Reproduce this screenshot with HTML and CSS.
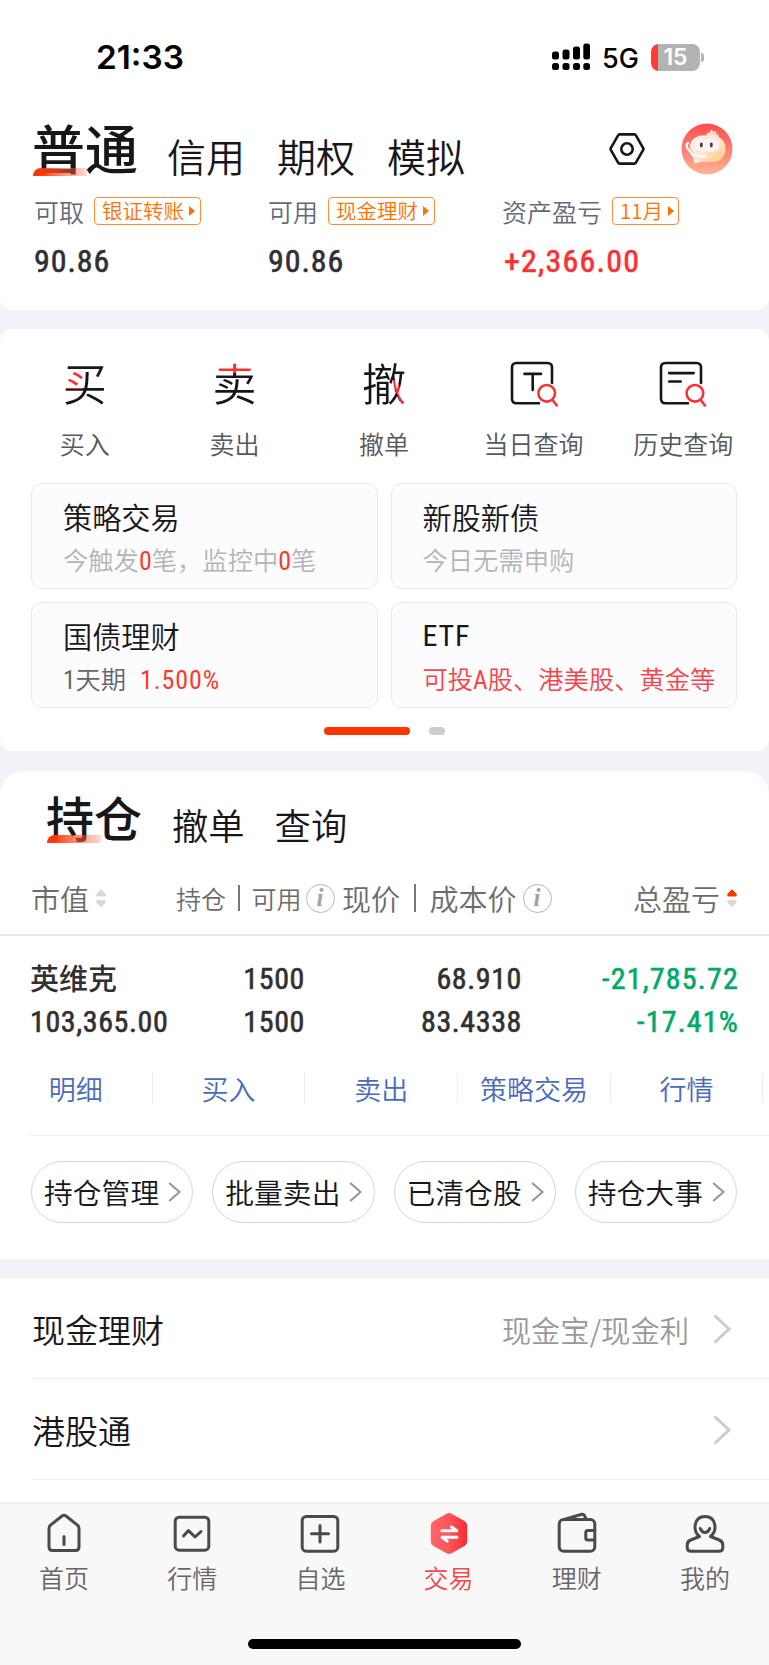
FILE: index.html
```html
<!DOCTYPE html>
<html lang="zh-CN">
<head>
    <meta charset="UTF-8">
    <meta name="viewport" content="width=device-width, initial-scale=1.0">
    <title>交易</title>
    <link rel="stylesheet" href="styles.css">
</head>
<body>
    <div class="app">
        <header class="account">
            <div class="status-bar">
                <span class="time">21:33</span>
                <svg class="signal" width="38" height="28" viewBox="0 0 38 28">
                    <rect x="0" y="8.5" width="7" height="8" rx="2.5"/>
                    <rect x="10.5" y="6.5" width="7" height="10" rx="2.5"/>
                    <rect x="21" y="3.5" width="7" height="13" rx="2.5"/>
                    <rect x="31.3" y="0.5" width="6.7" height="16" rx="2.5"/>
                    <rect x="0" y="20" width="7" height="7" rx="2.5"/>
                    <rect x="10.5" y="20" width="7" height="7" rx="2.5"/>
                    <rect x="21" y="20" width="7" height="7" rx="2.5"/>
                    <rect x="31.3" y="20" width="6.7" height="7" rx="2.5"/>
                </svg>
                <span class="network">5G</span>
                <span class="battery">15</span>
                <span class="battery-cap"></span>
            </div>

            <div class="account-head">
                <nav class="account-tabs">
                    <a class="active">普通</a>
                    <a>信用</a>
                    <a>期权</a>
                    <a>模拟</a>
                </nav>
                <svg class="settings" width="36" height="34" viewBox="0 0 36 34">
                    <path d="M10.600 2.400h14.800q1 0 1.500.9l7.300 12.700q.5 1 0 2l-7.300 12.700q-.5.9-1.500.9H10.600q-1 0-1.500-.9L1.800 18q-.5-1 0-2L9.100 3.300q.5-.9 1.500-.9z"/>
                    <circle cx="18" cy="17" r="5.700"/>
                </svg>
                <svg class="avatar" width="52" height="52" viewBox="0 0 52 52">
                    <defs>
                        <linearGradient id="avatarBg" x1="0" y1="0" x2="0" y2="1">
                            <stop offset="0" stop-color="#fb4c4f"/>
                            <stop offset="0.55" stop-color="#fc8474"/>
                            <stop offset="1" stop-color="#ffb595"/>
                        </linearGradient>
                        <linearGradient id="faceBg" x1="0" y1="0" x2="1" y2="1">
                            <stop offset="0" stop-color="#ffffff"/>
                            <stop offset="0.5" stop-color="#fde6dc"/>
                            <stop offset="0.8" stop-color="#ffd391"/>
                            <stop offset="1" stop-color="#fff0e8"/>
                        </linearGradient>
                    </defs>
                    <circle cx="26" cy="26" r="25.500" fill="url(#avatarBg)"/>
                    <path d="M25 13q1-5 3.500-3 1.500-6 4-1 3-2.500 3 2 3 0 2 4z" fill="#ffd9cb"/>
                    <rect x="8.500" y="12.500" width="36" height="26.500" rx="13" fill="url(#faceBg)"/>
                    <rect x="12.500" y="15" width="26.500" height="14" rx="7" fill="#fff3ee" stroke="#fcd5c8" stroke-width="0.700"/>
                    <path d="M7 20q-3 2 0 6 4 7 16 8" fill="none" stroke="#fff" stroke-width="2.200" stroke-linecap="round"/>
                    <path d="M8.500 21q0 7 5 9" fill="none" stroke="#f99b88" stroke-width="1"/>
                    <rect x="19.500" y="32" width="6" height="3" rx="1.500" fill="#fff"/>
                    <path d="M12 36l2 5q4-1 6-3z" fill="#ffe9e0"/>
                    <ellipse cx="20.300" cy="22" rx="1.500" ry="2.400" fill="#3c4048"/>
                    <ellipse cx="30.300" cy="22" rx="1.500" ry="2.400" fill="#3c4048"/>
                </svg>
            </div>

            <div class="balances">
                <div class="balance">
                    <div class="balance-label">可取 <span class="chip">银证转账<i></i></span></div>
                    <div class="balance-value num">90.86</div>
                </div>
                <div class="balance">
                    <div class="balance-label">可用 <span class="chip">现金理财<i></i></span></div>
                    <div class="balance-value num">90.86</div>
                </div>
                <div class="balance">
                    <div class="balance-label">资产盈亏 <span class="chip chip-month">11月<i></i></span></div>
                    <div class="balance-value num up">+2,366.00</div>
                </div>
            </div>
        </header>

        <section class="trade">
            <div class="trade-actions">
                <a><span class="glyph glyph-buy">买</span>买入</a>
                <a><span class="glyph glyph-sell">卖</span>卖出</a>
                <a><span class="glyph glyph-cancel">撤</span>撤单</a>
                <a>
                    <svg class="query-icon" width="50" height="50" viewBox="0 0 50 50">
                        <path d="M43 23V7.500q0-4.500-4.500-4.500H7.500Q3 3 3 7.500v31Q3 43.300 7.500 43.300H30"/>
                        <path d="M15.500 13.900h16.500M23.700 13.900V30"/>
                        <path class="lens" d="M46 33.300a8.300 8.300 0 1 1-16.600 0a8.300 8.300 0 1 1 16.600 0zM43.200 39.500l4.500 6"/>
                    </svg>
                    当日查询
                </a>
                <a>
                    <svg class="query-icon" width="50" height="50" viewBox="0 0 50 50">
                        <path d="M43 23V7.500q0-4.500-4.500-4.500H7.500Q3 3 3 7.500v31Q3 43.300 7.500 43.300H30"/>
                        <path d="M11.200 13.100h24.500M11.200 21.500h11.500"/>
                        <path class="lens" d="M45.200 33.300a8.300 8.300 0 1 1-16.600 0a8.300 8.300 0 1 1 16.600 0zM42.400 39.500l4.500 6"/>
                    </svg>
                    历史查询
                </a>
            </div>

            <div class="entries">
                <div class="entry">
                    <h3>策略交易</h3>
                    <p>今触发<b>0</b>笔，监控中<b>0</b>笔</p>
                </div>
                <div class="entry">
                    <h3>新股新债</h3>
                    <p>今日无需申购</p>
                </div>
                <div class="entry">
                    <h3>国债理财</h3>
                    <p class="dark"><span class="num">1</span>天期<b class="rate">1.500%</b></p>
                </div>
                <div class="entry">
                    <h3 class="num">ETF</h3>
                    <p class="red">可投<span class="num">A</span>股、港美股、黄金等</p>
                </div>
            </div>

            <div class="pager"><span class="current"></span><span></span></div>
        </section>

        <section class="holdings">
            <nav class="holding-tabs">
                <a class="active">持仓</a>
                <a>撤单</a>
                <a>查询</a>
            </nav>

            <div class="table-head">
                <div>市值
                    <svg class="sort" width="10" height="19" viewBox="0 0 10 19">
                        <path d="M5 .3 9.300 4.600Q10.300 7.500 8.500 7.500h-7Q-.3 7.500.7 4.600z"/>
                        <path d="M5 18.200 9.300 13.900Q10.300 11 8.500 11h-7Q-.3 11 .7 13.900z"/>
                    </svg>
                </div>
                <div class="small">持仓<span class="bar"></span>可用<span class="info">i</span></div>
                <div class="price">现价<span class="bar"></span>成本价<span class="info">i</span></div>
                <div class="profit">总盈亏
                    <svg class="sort" width="10" height="19" viewBox="0 0 10 19">
                        <path class="on" d="M5 .3 9.300 4.600Q10.300 7.500 8.500 7.500h-7Q-.3 7.500.7 4.600z"/>
                        <path d="M5 18.200 9.300 13.900Q10.300 11 8.500 11h-7Q-.3 11 .7 13.900z"/>
                    </svg>
                </div>
            </div>

            <div class="stock">
                <div class="stock-name">英维克</div>
                <div class="num">1500</div>
                <div class="num">68.910</div>
                <div class="num down">-21,785.72</div>
                <div class="num">103,365.00</div>
                <div class="num">1500</div>
                <div class="num">83.4338</div>
                <div class="num down">-17.41%</div>
            </div>

            <div class="stock-actions">
                <a>明细</a>
                <a>买入</a>
                <a>卖出</a>
                <a>策略交易</a>
                <a>行情</a>
            </div>

            <div class="pills">
                <a>持仓管理<svg width="13" height="20" viewBox="0 0 13 20"><path d="M1.200 1l10.300 9L1.200 19"/></svg></a>
                <a>批量卖出<svg width="13" height="20" viewBox="0 0 13 20"><path d="M1.200 1l10.300 9L1.200 19"/></svg></a>
                <a>已清仓股<svg width="13" height="20" viewBox="0 0 13 20"><path d="M1.200 1l10.300 9L1.200 19"/></svg></a>
                <a>持仓大事<svg width="13" height="20" viewBox="0 0 13 20"><path d="M1.200 1l10.300 9L1.200 19"/></svg></a>
            </div>
        </section>

        <section class="menu">
            <div class="menu-item">
                <span>现金理财</span>
                <span class="menu-note">现金宝/现金利</span>
                <svg width="18" height="30" viewBox="0 0 18 30"><path d="M1.500 1.500L16 15L1.500 28.500"/></svg>
            </div>
            <div class="menu-item">
                <span>港股通</span>
                <svg width="18" height="30" viewBox="0 0 18 30"><path d="M1.500 1.500L16 15L1.500 28.500"/></svg>
            </div>
        </section>

        <footer class="tab-bar">
            <nav>
                <a>
                    <svg width="44" height="44" viewBox="0 0 44 44">
                        <path d="M7 17.500q0-2 1.500-3.400L20 5q2-1.500 4 0l11.500 9.100q1.500 1.400 1.500 3.400V36q0 3.500-3.500 3.500h-23Q7 39.500 7 36z"/>
                        <path d="M22 25.500v8"/>
                    </svg>
                    首页
                </a>
                <a>
                    <svg width="44" height="44" viewBox="0 0 44 44">
                        <rect x="5.200" y="6.200" width="33.600" height="33" rx="4"/>
                        <path d="M13.500 25l5-5.500 6.500 6.500 6-5.500"/>
                    </svg>
                    行情
                </a>
                <a>
                    <svg width="44" height="44" viewBox="0 0 44 44">
                        <rect x="4.200" y="5.400" width="35.600" height="34.800" rx="4"/>
                        <path d="M22 14.500v16.500M13.500 22.800h17"/>
                    </svg>
                    自选
                </a>
                <a class="active">
                    <svg width="44" height="44" viewBox="0 0 44 44">
                        <defs>
                            <linearGradient id="tradeBg" x1="0" y1="0" x2="1" y2="0">
                                <stop offset="0" stop-color="#ff6669"/>
                                <stop offset="0.5" stop-color="#fd5659"/>
                                <stop offset="1" stop-color="#f42c2f"/>
                            </linearGradient>
                        </defs>
                        <path class="hex" d="M19.500 2.800q2.500-1.400 5 0l13 7.200q2.700 1.500 2.700 4.500v16q0 3-2.700 4.500l-13 7.200q-2.500 1.400-5 0l-13-7.200q-2.700-1.500-2.700-4.500v-16q0-3 2.700-4.500z"/>
                        <path class="swap" d="M14.800 19.800h15l-5.200-3.800M30 26.300h-15l5.200 3.800"/>
                    </svg>
                    交易
                </a>
                <a>
                    <svg width="44" height="44" viewBox="0 0 44 44">
                        <rect x="4.200" y="8.500" width="35.600" height="31.700" rx="4.500"/>
                        <path d="M10 8.300L27 3.300q1.500-.4 2.300 1l1.900 3.900M39.800 19.500h-7q-2 0-2 2v5.600q0 2 2 2h7"/>
                    </svg>
                    理财
                </a>
                <a>
                    <svg width="44" height="44" viewBox="0 0 44 44">
                        <path d="M16.500 25.500C9.500 20 10.500 5.400 22 5.400s12.500 14.600 5.500 20.100l8.800 3.500q3.500 1.500 3.500 5v2.200q0 4-4 4H8.200q-4 0-4-4V34q0-3.500 3.500-5z"/>
                        <path d="M17.300 17.500q1.500 4 4.700 4t4.700-4"/>
                    </svg>
                    我的
                </a>
            </nav>
            <div class="home-indicator"></div>
        </footer>
    </div>
</body>
</html>
```

FILE: styles.css
```css
* {
    box-sizing: border-box;
}

body {
    margin: 0;
    font-family: 'Noto Sans CJK SC', sans-serif;
    font-weight: 350;
    color: #17171b;
    background-color: #f2f3f9;
}

h3, p {
    margin: 0;
    font-weight: inherit;
}

svg {
    display: block;
    flex: none;
    fill: none;
}

.app {
    width: 769px;
    height: 1665px;
    overflow: hidden;
    display: flex;
    flex-direction: column;
}

.num {
    font-family: Roboto, 'Noto Sans CJK SC', sans-serif;
    font-stretch: 85%;
    font-weight: 400;
}

/* Account header */
.account {
    height: 310px;
    background-color: #fff;
    border-radius: 0 0 12px 12px;
}

.status-bar {
    height: 110px;
    padding: 4px 65px 0 96px;
    display: flex;
    align-items: center;
    font-family: Inter, sans-serif;
    color: #000;
}

.time {
    flex: 1;
    font-size: 33.300px;
    font-weight: 600;
}

.signal {
    fill: #000;
}

.network {
    margin-left: 12px;
    width: 49px;
    font-size: 27px;
    font-weight: 500;
    padding-top: 2px;
}

.battery {
    width: 49px;
    height: 27px;
    border-radius: 8px;
    background: linear-gradient(90deg, #ff3b30 7px, #b3b3b3 7px);
    color: #fff;
    font-size: 23px;
    font-weight: 600;
    line-height: 27px;
    text-align: center;
}

.battery-cap {
    width: 3px;
    height: 9px;
    margin-left: 1px;
    background-color: #b3b3b3;
    border-radius: 0 4px 4px 0;
}

.account-head {
    height: 76px;
    padding: 0 36px 0 32px;
    display: flex;
    align-items: flex-start;
}

.account-tabs {
    flex: 1;
    height: 69px;
    display: flex;
    align-items: flex-end;
    gap: 32px;
    font-size: 39px;
    line-height: 48px;
}

.account-tabs .active {
    font-size: 53px;
    font-weight: 500;
    line-height: 58px;
    margin-right: -3px;
    padding-bottom: 3px;
}

.account-tabs .active,
.holding-tabs .active {
    position: relative;
}

.account-tabs .active::after,
.holding-tabs .active::after {
    content: '';
    position: absolute;
    left: 1px;
    bottom: 3px;
    width: 54px;
    height: 8px;
    border-radius: 8px 0 0 0;
    background: linear-gradient(90deg, #ff3305 10%, rgba(255, 80, 40, 0.75) 45%, rgba(255, 120, 80, 0.25));
}

.holding-tabs .active::after {
    bottom: 4px;
}

.settings {
    margin: 22px 36px 0 0;
    stroke: #17171b;
    stroke-width: 2.600;
}

.avatar {
    margin-top: 13px;
}

.balances {
    display: grid;
    grid-template-columns: 234px 234px 1fr;
    padding-left: 34px;
}

.balance-label {
    display: flex;
    align-items: center;
    height: 49px;
    font-size: 25px;
    color: #66687a;
}

.chip {
    display: flex;
    align-items: center;
    gap: 5px;
    width: 107px;
    height: 28px;
    margin-left: 10px;
    padding-left: 7px;
    border: 1.500px solid #ff8c38;
    border-radius: 4px;
    font-size: 20.500px;
    line-height: 25px;
    color: #ff7200;
}

.chip i {
    border: 5px solid transparent;
    border-left: 6px solid #ff7200;
    border-right: 0;
}

.chip-month {
    width: 67px;
}

.balance-value {
    height: 50px;
    font-size: 32px;
    line-height: 52px;
    letter-spacing: 0.900px;
    color: #303032;
    -webkit-text-stroke: 0.600px currentColor;
}

.balance-value.up {
    padding-left: 2px;
    letter-spacing: 1.200px;
    color: #fc2f33;
}

/* Trade shortcuts */
.trade {
    height: 422px;
    margin-top: 19px;
    background-color: #fff;
    border-radius: 12px;
}

.trade-actions {
    display: grid;
    grid-template-columns: repeat(5, 1fr);
    padding: 31px 11px 0 10px;
    height: 154px;
}

.trade-actions a {
    display: flex;
    flex-direction: column;
    align-items: center;
    font-size: 25px;
    line-height: 34px;
    color: #55585c;
}

.glyph {
    width: 44px;
    height: 50px;
    margin-bottom: 16px;
    font-size: 44px;
    line-height: 44px;
    background-repeat: no-repeat;
    background-color: #17171b;
    -webkit-background-clip: text;
    background-clip: text;
    color: transparent;
}

/* red strokes inside the characters */
.glyph-buy {
    background-image: linear-gradient(#fc2f33, #fc2f33);
    background-size: 17px 17px;
    background-position: 3px 12px;
}

.glyph-sell {
    background-image: linear-gradient(#fc2f33, #fc2f33);
    background-size: 44px 13px;
}

.glyph-cancel {
    background-image: linear-gradient(68deg, transparent 40%, #fc2f33 40%, #fc2f33 62%, transparent 62%);
    background-size: 14px 26px;
    background-position: 30px 20px;
}

.query-icon {
    margin-bottom: 16px;
    stroke: #17171b;
    stroke-width: 2.600;
    stroke-linecap: round;
}

.query-icon .lens {
    stroke: #fc2f33;
}

.entries {
    display: grid;
    grid-template-columns: repeat(2, minmax(0, 1fr));
    grid-auto-rows: 106px;
    gap: 13px;
    padding: 0 32px 0 31px;
}

.entry {
    padding: 11px 0 0 31px;
    background-color: #fcfcff;
    border: 1.300px solid #e8e8f1;
    border-radius: 11px;
    white-space: nowrap;
}

.entry h3 {
    font-size: 29.200px;
    line-height: 42px;
}

.entry h3.num {
    padding-top: 2px;
    line-height: 40px;
    font-size: 30px;
    letter-spacing: 0.800px;
}

.entry p {
    padding-top: 1px;
    font-size: 25.300px;
    line-height: 43px;
    color: #b4b4b8;
}

.entry p.dark {
    color: #66666a;
}

.entry p.red {
    color: #fb4247;
}

.entry b {
    font-family: Roboto, sans-serif;
    font-stretch: 85%;
    font-weight: 400;
    font-size: 26px;
    color: #fa3a2c;
}

.entry .rate {
    margin-left: 14px;
    letter-spacing: 0.900px;
}

.pager {
    display: flex;
    gap: 19px;
    padding: 19px 0 0 324px;
}

.pager span {
    width: 16px;
    height: 8px;
    border-radius: 4px;
    background-color: #ccc;
}

.pager .current {
    width: 86px;
    background-color: #ff3300;
}

/* Holdings */
.holdings {
    height: 488px;
    margin-top: 20px;
    background-color: #fff;
    border-radius: 24px 24px 0 0;
}

.holding-tabs {
    height: 76px;
    padding-left: 46px;
    display: flex;
    align-items: flex-end;
    gap: 30px;
    font-size: 36.300px;
    line-height: 46px;
}

.holding-tabs .active {
    font-size: 48px;
    font-weight: 500;
    line-height: 54px;
    padding-bottom: 4px;
}

.table-head {
    display: grid;
    grid-template-columns: 145px 166px 292px 1fr;
    height: 89px;
    padding: 15px 33px 0 31px;
    border-bottom: 2px solid #e6e6ef;
    font-size: 29px;
    color: #6b6b6e;
}

.table-head > div {
    display: flex;
    align-items: center;
    white-space: nowrap;
}

.sort {
    margin-left: 7px;
    fill: #d9d9d9;
}

.sort .on {
    fill: #ff3300;
}

.bar {
    width: 1.500px;
    height: 26px;
    margin: 0 12px;
    background-color: #77777a;
}

.price .bar {
    height: 28px;
    margin: 0 14px;
}

.table-head .profit {
    margin-left: -1px;
}

.info {
    width: 29px;
    height: 29px;
    margin-left: 6px;
    border: 1.500px solid #b5b5b5;
    border-radius: 50%;
    font-family: 'Liberation Serif', serif;
    font-size: 25px;
    font-style: italic;
    font-weight: 700;
    line-height: 25px;
    text-align: center;
    color: #a2a2a2;
}

.table-head .small {
    font-size: 25px;
}

.small .info {
    margin-left: 4px;
}

.stock {
    display: grid;
    grid-template-columns: 150px 125px 217px 1fr;
    grid-auto-rows: 42.500px;
    padding: 22px 30px 0 30px;
    font-size: 30px;
    line-height: 42px;
    letter-spacing: 0.600px;
    color: #303032;
    text-align: right;
}

.stock > :nth-child(4n + 1) {
    text-align: left;
}

.stock .num {
    -webkit-text-stroke: 0.600px currentColor;
}

.stock .stock-name {
    font-size: 29px;
    font-weight: 500;
    line-height: 38px;
    letter-spacing: 0;
}

.stock .down {
    letter-spacing: 1.200px;
    color: #00a96b;
}

.stock-actions {
    display: grid;
    grid-template-columns: repeat(5, 152.700px);
    height: 93px;
    margin-left: 30px;
    padding-top: 30px;
    border-bottom: 1.500px solid #ececf4;
    font-size: 27px;
    line-height: 31px;
    color: #4a6bbd;
}

.stock-actions a {
    height: 30px;
    text-align: center;
    border-right: 1.500px solid #ececf2;
    margin-left: -30px;
    margin-right: 30px;
}

.pills {
    display: grid;
    grid-template-columns: repeat(4, 1fr);
    gap: 19px;
    padding: 25px 32px 0 31px;
}

.pills a {
    display: flex;
    align-items: center;
    gap: 9px;
    height: 62px;
    padding-left: 12px;
    border: 1.400px solid #d4d4de;
    border-radius: 31px;
    font-size: 28.800px;
    line-height: 60px;
    white-space: nowrap;
}

.pills svg {
    stroke: #939399;
    stroke-width: 2;
}

/* Product list */
.menu {
    height: 224px;
    margin-top: 19px;
    background-color: #fff;
}

.menu-item {
    display: flex;
    align-items: center;
    height: 101px;
    margin-left: 32px;
    padding: 1px 38px 0 0;
    border-bottom: 1.500px solid #eeeef0;
    font-size: 33px;
}

.menu-item svg {
    margin-left: auto;
    stroke: #cbcad6;
    stroke-width: 3;
}

.menu-note {
    margin-left: auto;
    font-size: 29.300px;
    color: #99999c;
}

.menu-note + svg {
    margin-left: 24px;
}

/* Bottom tabs */
.tab-bar {
    flex: 1;
    padding-top: 7px;
    background-color: #f8f8f8;
    border-top: 2px solid #eee;
}

.tab-bar nav {
    display: grid;
    grid-template-columns: repeat(6, 1fr);
    height: 128px;
}

.tab-bar a {
    display: flex;
    flex-direction: column;
    align-items: center;
    font-size: 25px;
    line-height: 44px;
    color: #66666a;
}

.tab-bar svg {
    stroke: #4a4a4c;
    stroke-width: 3;
    stroke-linecap: round;
    stroke-linejoin: round;
}

.tab-bar .active {
    color: #f8484c;
}

.tab-bar .hex {
    fill: url(#tradeBg);
    stroke: none;
}

.tab-bar .swap {
    stroke: #fff;
}

.home-indicator {
    width: 273px;
    height: 10px;
    margin: 0 auto;
    border-radius: 5px;
    background-color: #000;
}
```
